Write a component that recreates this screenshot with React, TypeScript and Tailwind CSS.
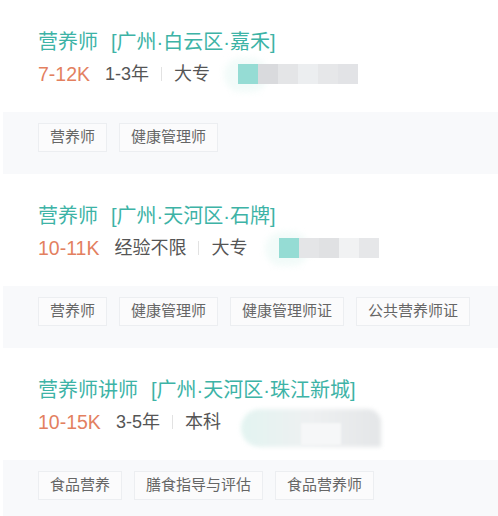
import React from "react"

interface Job {
  title: string
  area: string
  salary: string
  exp: string
  edu: string
  tags: string[]
  blur: "strip" | "short" | "blob"
}

const jobs: Job[] = [
  {
    title: "营养师",
    area: "[广州·白云区·嘉禾]",
    salary: "7-12K",
    exp: "1-3年",
    edu: "大专",
    tags: ["营养师", "健康管理师"],
    blur: "strip",
  },
  {
    title: "营养师",
    area: "[广州·天河区·石牌]",
    salary: "10-11K",
    exp: "经验不限",
    edu: "大专",
    tags: ["营养师", "健康管理师", "健康管理师证", "公共营养师证"],
    blur: "short",
  },
  {
    title: "营养师讲师",
    area: "[广州·天河区·珠江新城]",
    salary: "10-15K",
    exp: "3-5年",
    edu: "本科",
    tags: ["食品营养", "膳食指导与评估", "食品营养师"],
    blur: "blob",
  },
]

// pixelated / blurred company name placeholder
function Redacted({ kind }: { kind: Job["blur"] }) {
  if (kind === "blob") {
    return (
      <div className="relative ml-[20px] h-[38px] w-[140px] -mb-[12px]">
        <div className="absolute inset-0 rounded-l-[20px] rounded-tr-[14px] bg-gradient-to-r from-[#e3f4f1] via-[#eef0f1] to-[#e4e6e8] blur-[2px]" />
        <div className="absolute left-[60px] top-[14px] h-[22px] w-[40px] bg-[#f6f7f8] blur-[1px]" />
      </div>
    )
  }
  const short = kind === "short"
  return (
    <div className={`relative flex items-center ${short ? "ml-[32px]" : "ml-[28px]"}`}>
      <div className="absolute -left-[14px] top-[-6px] h-[34px] w-[44px] rounded-full bg-[#f2fbf9] blur-[3px]" />
      <div className="relative flex h-[20px] blur-[0.6px]">
        <div className="w-[20px] bg-[#95dcd4]" />
        {short ? (
          <>
            <div className="w-[20px] bg-[#e4e5e7]" />
            <div className="w-[20px] bg-[#e0e1e3]" />
            <div className="w-[20px] bg-[#f1f2f3]" />
            <div className="w-[20px] bg-[#e6e7e9]" />
          </>
        ) : (
          <>
            <div className="w-[20px] bg-[#d9dadd]" />
            <div className="w-[20px] bg-[#e4e5e7]" />
            <div className="w-[20px] bg-[#eceef0]" />
            <div className="w-[20px] bg-[#e6e7e9]" />
            <div className="w-[20px] bg-[#e2e3e6]" />
          </>
        )}
      </div>
    </div>
  )
}

function JobCard({ job }: { job: Job }) {
  return (
    <div>
      <div className="px-[38px] pt-[29px] pb-[25px]">
        <div className="flex h-[26px] items-center text-[20px] leading-[26px] text-[#3db3a6]">
          <span>{job.title}</span>
          <span className="ml-[13px]">{job.area}</span>
        </div>
        <div className="mt-[6px] flex h-[26px] items-center leading-[26px]">
          <span className="text-[19.5px] text-[#e3805f]">{job.salary}</span>
          <span className="ml-[15px] text-[18px] text-[#555]">{job.exp}</span>
          <span className="mx-[12px] h-[14px] w-px bg-[#e2e2e2]" />
          <span className="text-[18px] text-[#555]">{job.edu}</span>
          <Redacted kind={job.blur} />
        </div>
      </div>
      <div className="ml-[3px] flex gap-[12px] bg-[#f8f9fb] pl-[35px] pt-[11px] pb-[22px]">
        {job.tags.map((t) => (
          <span
            key={t}
            className="flex h-[29px] items-center border border-[#eceef1] bg-[#fbfbfc] px-[11px] text-[15px] text-[#666]"
          >
            {t}
          </span>
        ))}
      </div>
    </div>
  )
}

export default function App() {
  return (
    <div
      className="h-[516px] w-[498px] overflow-hidden bg-white"
      style={{ fontFamily: '"Liberation Sans", "Noto Sans CJK SC", sans-serif' }}
    >
      {jobs.map((job, i) => (
        <JobCard key={i} job={job} />
      ))}
    </div>
  )
}
